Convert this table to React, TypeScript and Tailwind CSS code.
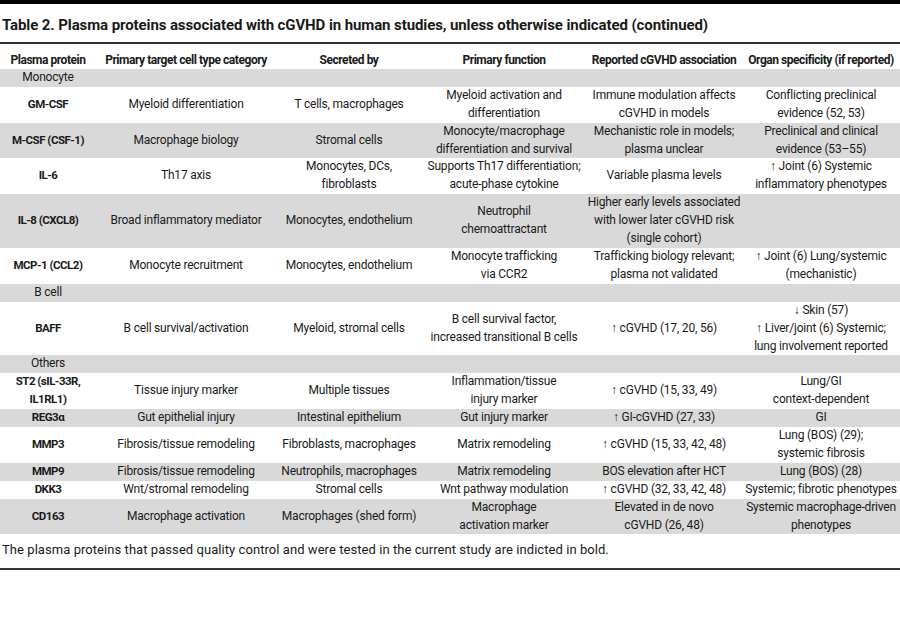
import React from 'react';

type Row =
  | { kind: 'group'; label: string }
  | { kind: 'data'; cells: string[][] };

// each cell = list of lines
const rows: Row[] = [
  { kind: 'group', label: 'Monocyte' },
  {
    kind: 'data',
    cells: [
      ['GM-CSF'],
      ['Myeloid differentiation'],
      ['T cells, macrophages'],
      ['Myeloid activation and', 'differentiation'],
      ['Immune modulation affects', 'cGVHD in models'],
      ['Conflicting preclinical', 'evidence (52, 53)'],
    ],
  },
  {
    kind: 'data',
    cells: [
      ['M-CSF (CSF-1)'],
      ['Macrophage biology'],
      ['Stromal cells'],
      ['Monocyte/macrophage', 'differentiation and survival'],
      ['Mechanistic role in models;', 'plasma unclear'],
      ['Preclinical and clinical', 'evidence (53–55)'],
    ],
  },
  {
    kind: 'data',
    cells: [
      ['IL-6'],
      ['Th17 axis'],
      ['Monocytes, DCs,', 'fibroblasts'],
      ['Supports Th17 differentiation;', 'acute-phase cytokine'],
      ['Variable plasma levels'],
      ['↑ Joint (6) Systemic', 'inflammatory phenotypes'],
    ],
  },
  {
    kind: 'data',
    cells: [
      ['IL-8 (CXCL8)'],
      ['Broad inflammatory mediator'],
      ['Monocytes, endothelium'],
      ['Neutrophil', 'chemoattractant'],
      ['Higher early levels associated', 'with lower later cGVHD risk', '(single cohort)'],
      [''],
    ],
  },
  {
    kind: 'data',
    cells: [
      ['MCP-1 (CCL2)'],
      ['Monocyte recruitment'],
      ['Monocytes, endothelium'],
      ['Monocyte trafficking', 'via CCR2'],
      ['Trafficking biology relevant;', 'plasma not validated'],
      ['↑ Joint (6) Lung/systemic', '(mechanistic)'],
    ],
  },
  { kind: 'group', label: 'B cell' },
  {
    kind: 'data',
    cells: [
      ['BAFF'],
      ['B cell survival/activation'],
      ['Myeloid, stromal cells'],
      ['B cell survival factor,', 'increased transitional B cells'],
      ['↑ cGVHD (17, 20, 56)'],
      ['↓ Skin (57)', '↑ Liver/joint (6) Systemic;', 'lung involvement reported'],
    ],
  },
  { kind: 'group', label: 'Others' },
  {
    kind: 'data',
    cells: [
      ['ST2 (sIL-33R,', 'IL1RL1)'],
      ['Tissue injury marker'],
      ['Multiple tissues'],
      ['Inflammation/tissue', 'injury marker'],
      ['↑ cGVHD (15, 33, 49)'],
      ['Lung/GI', 'context-dependent'],
    ],
  },
  {
    kind: 'data',
    cells: [
      ['REG3α'],
      ['Gut epithelial injury'],
      ['Intestinal epithelium'],
      ['Gut injury marker'],
      ['↑ GI-cGVHD (27, 33)'],
      ['GI'],
    ],
  },
  {
    kind: 'data',
    cells: [
      ['MMP3'],
      ['Fibrosis/tissue remodeling'],
      ['Fibroblasts, macrophages'],
      ['Matrix remodeling'],
      ['↑ cGVHD (15, 33, 42, 48)'],
      ['Lung (BOS) (29);', 'systemic fibrosis'],
    ],
  },
  {
    kind: 'data',
    cells: [
      ['MMP9'],
      ['Fibrosis/tissue remodeling'],
      ['Neutrophils, macrophages'],
      ['Matrix remodeling'],
      ['BOS elevation after HCT'],
      ['Lung (BOS) (28)'],
    ],
  },
  {
    kind: 'data',
    cells: [
      ['DKK3'],
      ['Wnt/stromal remodeling'],
      ['Stromal cells'],
      ['Wnt pathway modulation'],
      ['↑ cGVHD (32, 33, 42, 48)'],
      ['Systemic; fibrotic phenotypes'],
    ],
  },
  {
    kind: 'data',
    cells: [
      ['CD163'],
      ['Macrophage activation'],
      ['Macrophages (shed form)'],
      ['Macrophage', 'activation marker'],
      ['Elevated in de novo', 'cGVHD (26, 48)'],
      ['Systemic macrophage-driven', 'phenotypes'],
    ],
  },
];

const headers = [
  'Plasma protein',
  'Primary target cell type category',
  'Secreted by',
  'Primary function',
  'Reported cGVHD association',
  'Organ specificity (if reported)',
];

export default function App() {
  // alternate shading: group rows are always gray, data rows alternate
  let shade = true;
  return (
    <div className="w-[900px] h-[631px] bg-white font-['Roboto',sans-serif] text-[#1a1a1a]">
      <div className="h-[4px] bg-black" />
      <h2 className="px-[2px] pt-[13px] pb-[8px] text-[15px] leading-[17px] font-bold tracking-[-0.1px]">
        Table 2. Plasma proteins associated with cGVHD in human studies, unless otherwise indicated (continued)
      </h2>
      <div className="h-[2px] bg-[#333]" />
      <table className="w-full table-fixed border-collapse text-[12px] leading-[17.9px] tracking-[-0.2px]">
        <colgroup>
          <col className="w-[96px]" />
          <col className="w-[180px]" />
          <col className="w-[146px]" />
          <col className="w-[164px]" />
          <col className="w-[156px]" />
          <col className="w-[158px]" />
        </colgroup>
        <thead>
          <tr>
            {headers.map((h) => (
              <th
                key={h}
                className="pt-[9px] pb-0 px-0 text-center font-bold leading-[15.9px] tracking-[-0.45px] whitespace-nowrap"
              >
                {h}
              </th>
            ))}
          </tr>
        </thead>
        <tbody>
          {rows.map((r, i) => {
            if (r.kind === 'group') {
              shade = false;
              return (
                <tr key={i} className="bg-[#d9d9d9]">
                  <td className="text-center p-0">{r.label}</td>
                  <td colSpan={5} />
                </tr>
              );
            }
            const bg = shade ? 'bg-[#d9d9d9]' : 'bg-white';
            shade = !shade;
            return (
              <tr key={i} className={bg}>
                {r.cells.map((lines, j) => (
                  <td
                    key={j}
                    className={`p-0 text-center align-middle whitespace-nowrap ${
                      j === 0 ? 'font-bold text-[11.5px] tracking-[-0.5px]' : ''
                    }`}
                  >
                    {lines.map((l, k) => (
                      <div key={k}>{l}</div>
                    ))}
                  </td>
                ))}
              </tr>
            );
          })}
        </tbody>
      </table>
      <p className="px-[2px] pt-[7px] pb-[9px] text-[13px] leading-[18px] tracking-[0.06px]">
        The plasma proteins that passed quality control and were tested in the current study are indicted in bold.
      </p>
      <div className="h-[2px] bg-[#333]" />
    </div>
  );
}
